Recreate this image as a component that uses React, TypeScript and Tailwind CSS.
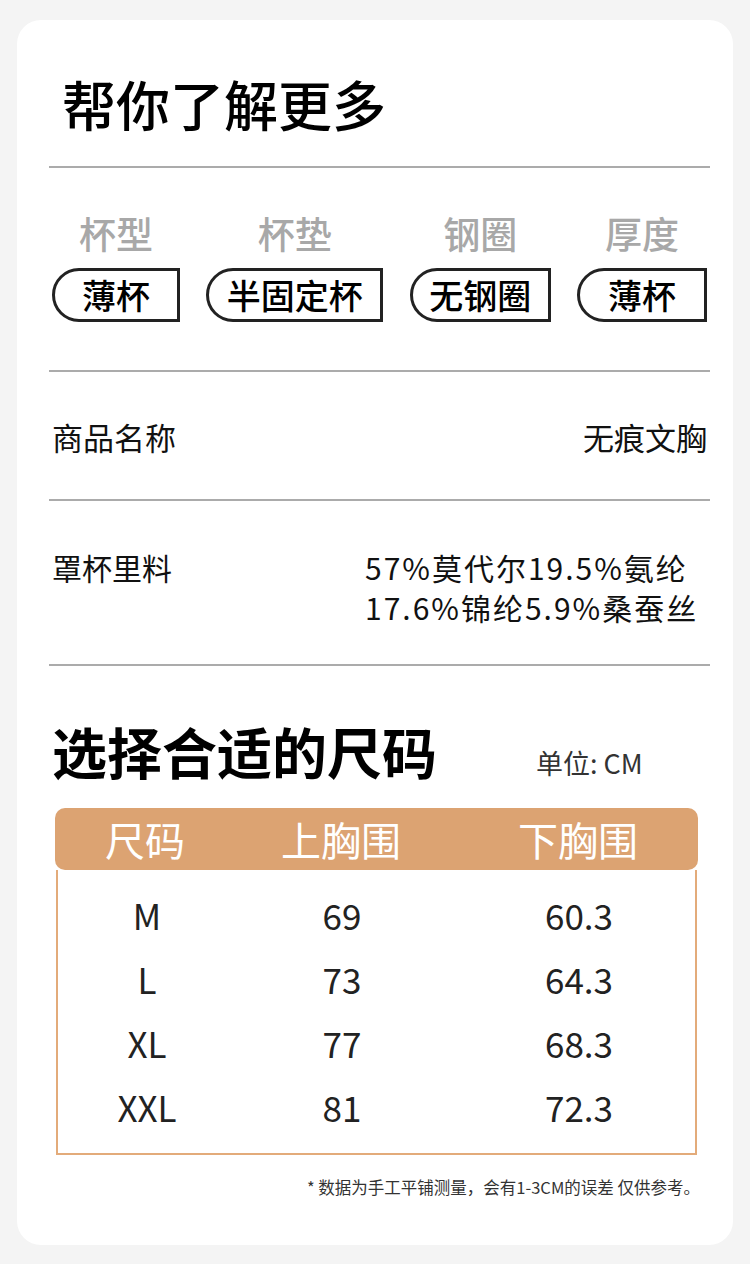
import React from 'react';

// 杯型 / 杯垫 / 钢圈 / 厚度
const features = [
  { label: '杯型', value: '薄杯', width: 'w-[128px]' },
  { label: '杯垫', value: '半固定杯', width: 'w-[177px]' },
  { label: '钢圈', value: '无钢圈', width: 'w-[141px]' },
  { label: '厚度', value: '薄杯', width: 'w-[130px]' },
];

const sizes = [
  { size: 'M', upper: '69', lower: '60.3' },
  { size: 'L', upper: '73', lower: '64.3' },
  { size: 'XL', upper: '77', lower: '68.3' },
  { size: 'XXL', upper: '81', lower: '72.3' },
];

function Divider() {
  return <div className="h-[2px] w-full bg-[#ababab]" />;
}

export default function App() {
  return (
    <div className="min-h-[1264px] bg-[#f4f4f4] pt-[20px] pb-[19px] font-['Noto_Sans_CJK_SC',sans-serif]">
      <div className="mx-[17px] rounded-[24px] bg-white pl-[32px] pr-[23px] pb-[48px]">
        {/* Header */}
        <h1 className="pt-[57px] pl-[13px] text-[54px] leading-[54px] font-medium text-black">
          帮你了解更多
        </h1>
        <div className="mt-[35px]">
          <Divider />
        </div>

        {/* Features */}
        <div className="flex justify-between px-[3px] pt-[47px] pb-[48px]">
          {features.map((f, i) => (
            <div key={i} className="flex flex-col items-center">
              <span className="text-[37px] leading-[37px] font-medium text-[#a8a8a8]">{f.label}</span>
              <div
                className={`mt-[16px] flex h-[54px] items-center justify-center rounded-l-[27px] border-[3px] border-[#222] ${f.width}`}
              >
                <span className="text-[34px] leading-[34px] font-medium text-black">{f.value}</span>
              </div>
            </div>
          ))}
        </div>
        <Divider />

        {/* 商品名称 */}
        <div className="flex justify-between px-[3px] pt-[45px] pb-[42px] text-[31px] leading-[40px] text-[#111]">
          <span>商品名称</span>
          <span>无痕文胸</span>
        </div>
        <Divider />

        {/* 罩杯里料 */}
        <div className="flex px-[3px] pt-[46px] pb-[37px] text-[30px] leading-[40px] text-[#111]">
          <span className="w-[313px]">罩杯里料</span>
          <div className="flex flex-col tracking-[2px]">
            <span>57%莫代尔19.5%氨纶</span>
            <span>17.6%锦纶5.9%桑蚕丝</span>
          </div>
        </div>
        <Divider />

        {/* Size table */}
        <div className="flex items-center px-[3px] pt-[54px]">
          <h2 className="text-[55px] leading-[60px] font-bold text-black">选择合适的尺码</h2>
          <span className="ml-[99px] pt-[26px] text-[27px] leading-[26px] text-[#333]">单位: CM</span>
        </div>

        <div className="mt-[28px] ml-[6px] mr-[12px]">
          <div className="grid h-[62px] grid-cols-[180px_212px_262px] items-center rounded-[10px] bg-[#dca372] text-center text-[40px] leading-[40px] text-white">
            <span>尺码</span>
            <span>上胸围</span>
            <span>下胸围</span>
          </div>
          <div className="mx-px border-x-2 border-b-2 border-[#e3ab7a] pt-[12px] pb-[15px]">
            {sizes.map((row) => (
              <div
                key={row.size}
                className="grid h-[64px] grid-cols-[178px_212px_262px] items-center text-center text-[35px] leading-[35px] text-[#222]"
              >
                <span>{row.size}</span>
                <span>{row.upper}</span>
                <span>{row.lower}</span>
              </div>
            ))}
          </div>
        </div>

        <p className="mt-[22px] mr-[10px] text-right text-[16.5px] leading-[20px] text-[#333]">
          * 数据为手工平铺测量，会有1-3CM的误差 仅供参考。
        </p>
      </div>
    </div>
  );
}
